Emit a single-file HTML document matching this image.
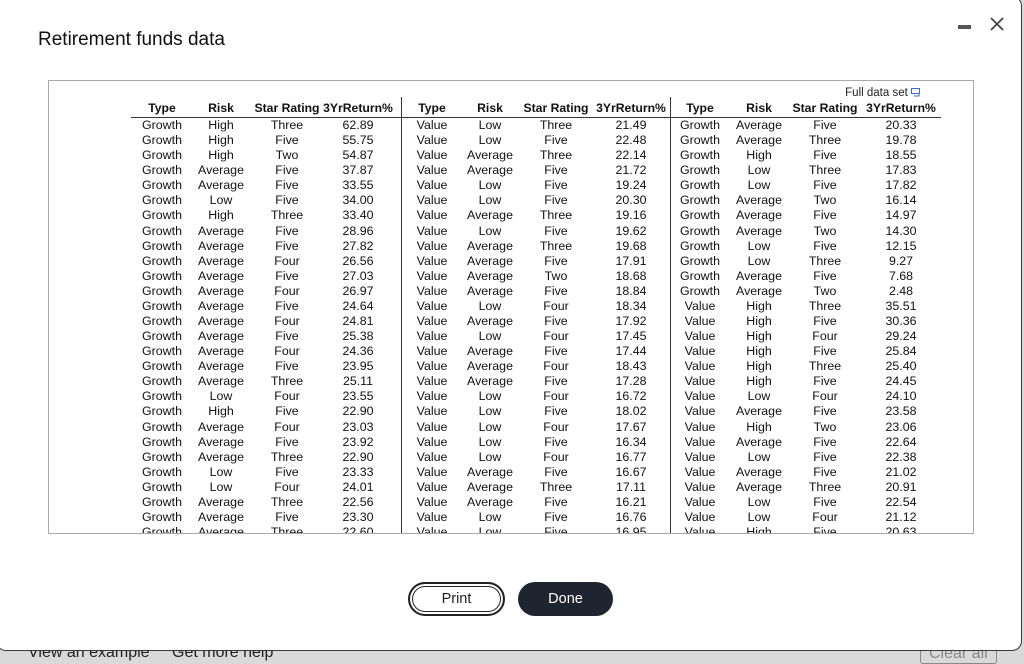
<!DOCTYPE html>
<html><head><meta charset="utf-8"><style>
*{margin:0;padding:0;box-sizing:border-box}
body{width:1024px;height:657px;overflow:hidden;background:#d9d9d9;font-family:"Liberation Sans",Arial,sans-serif;position:relative}
.modal{position:absolute;left:-4px;top:-4px;width:1026px;height:655px;background:#fff;border:1.5px solid #3a3a3a;border-radius:0 10px 10px 10px;z-index:1}
.z{z-index:2}
.title{position:absolute;left:38px;top:29px;font-size:19px;color:#111;z-index:2}
.box{position:absolute;left:48px;top:80px;width:926px;height:454px;border:1px solid #aaa;overflow:hidden;background:#fff;z-index:2}
.col{position:absolute;width:90px;text-align:center;font-size:12.4px;line-height:15.08px;color:#111;white-space:nowrap}
.hd{position:absolute;width:100px;text-align:center;font-size:12.2px;font-weight:bold;color:#111;top:20px;white-space:nowrap}
.hline{position:absolute;left:82px;top:36px;width:810px;height:1px;background:#333}
.vline{position:absolute;width:1px;background:#333;top:16px;height:440px}
.fds{position:absolute;right:52px;top:6px;font-size:11.5px;color:#222}
.btn{position:absolute;top:582px;height:34px;border-radius:17px;font-size:14.5px;text-align:center;line-height:30px;z-index:2}
.bot{position:absolute;top:644px;font-size:16px;color:#222}
</style></head><body>
<div class="bot" style="left:28px">View an example</div>
<div class="bot" style="left:172px">Get more help</div>
<div class="bot" style="left:920px;color:#888;border:1px solid #888;padding:0 8px;border-radius:3px">Clear all</div>
<div class="modal"></div>
<div class="title">Retirement funds data</div>
<div class="z" style="position:absolute;left:958px;top:25px;width:13px;height:4px;background:#555"></div>
<svg class="z" style="position:absolute;left:989px;top:16px" width="16" height="16"><path d="M2 2L14 14M14 2L2 14" stroke="#444" stroke-width="1.8"/></svg>
<div class="box">
<div class="fds">Full data set <svg width="10" height="9" style="vertical-align:-1px"><rect x="0.5" y="0.5" width="8" height="5" fill="none" stroke="#3a6bd4"/><path d="M3 8h5v-2" fill="none" stroke="#3a6bd4"/></svg></div>
<div class="hd" style="left:63px">Type</div><div class="hd" style="left:122px">Risk</div><div class="hd" style="left:188px">Star Rating</div><div class="hd" style="left:259px">3YrReturn%</div>
<div class="hd" style="left:333px">Type</div><div class="hd" style="left:391px">Risk</div><div class="hd" style="left:457px">Star Rating</div><div class="hd" style="left:532px">3YrReturn%</div>
<div class="hd" style="left:601px">Type</div><div class="hd" style="left:660px">Risk</div><div class="hd" style="left:726px">Star Rating</div><div class="hd" style="left:802px">3YrReturn%</div>
<div class="hline"></div>
<div class="vline" style="left:352px"></div><div class="vline" style="left:621px"></div>
<div class="col" style="left:68px;top:37px">Growth<br>Growth<br>Growth<br>Growth<br>Growth<br>Growth<br>Growth<br>Growth<br>Growth<br>Growth<br>Growth<br>Growth<br>Growth<br>Growth<br>Growth<br>Growth<br>Growth<br>Growth<br>Growth<br>Growth<br>Growth<br>Growth<br>Growth<br>Growth<br>Growth<br>Growth<br>Growth<br>Growth</div>
<div class="col" style="left:127px;top:37px">High<br>High<br>High<br>Average<br>Average<br>Low<br>High<br>Average<br>Average<br>Average<br>Average<br>Average<br>Average<br>Average<br>Average<br>Average<br>Average<br>Average<br>Low<br>High<br>Average<br>Average<br>Average<br>Low<br>Low<br>Average<br>Average<br>Average</div>
<div class="col" style="left:193px;top:37px">Three<br>Five<br>Two<br>Five<br>Five<br>Five<br>Three<br>Five<br>Five<br>Four<br>Five<br>Four<br>Five<br>Four<br>Five<br>Four<br>Five<br>Three<br>Four<br>Five<br>Four<br>Five<br>Three<br>Five<br>Four<br>Three<br>Five<br>Three</div>
<div class="col" style="left:264px;top:37px">62.89<br>55.75<br>54.87<br>37.87<br>33.55<br>34.00<br>33.40<br>28.96<br>27.82<br>26.56<br>27.03<br>26.97<br>24.64<br>24.81<br>25.38<br>24.36<br>23.95<br>25.11<br>23.55<br>22.90<br>23.03<br>23.92<br>22.90<br>23.33<br>24.01<br>22.56<br>23.30<br>22.60</div>
<div class="col" style="left:338px;top:37px">Value<br>Value<br>Value<br>Value<br>Value<br>Value<br>Value<br>Value<br>Value<br>Value<br>Value<br>Value<br>Value<br>Value<br>Value<br>Value<br>Value<br>Value<br>Value<br>Value<br>Value<br>Value<br>Value<br>Value<br>Value<br>Value<br>Value<br>Value</div>
<div class="col" style="left:396px;top:37px">Low<br>Low<br>Average<br>Average<br>Low<br>Low<br>Average<br>Low<br>Average<br>Average<br>Average<br>Average<br>Low<br>Average<br>Low<br>Average<br>Average<br>Average<br>Low<br>Low<br>Low<br>Low<br>Low<br>Average<br>Average<br>Average<br>Low<br>Low</div>
<div class="col" style="left:462px;top:37px">Three<br>Five<br>Three<br>Five<br>Five<br>Five<br>Three<br>Five<br>Three<br>Five<br>Two<br>Five<br>Four<br>Five<br>Four<br>Five<br>Four<br>Five<br>Four<br>Five<br>Four<br>Five<br>Four<br>Five<br>Three<br>Five<br>Five<br>Five</div>
<div class="col" style="left:537px;top:37px">21.49<br>22.48<br>22.14<br>21.72<br>19.24<br>20.30<br>19.16<br>19.62<br>19.68<br>17.91<br>18.68<br>18.84<br>18.34<br>17.92<br>17.45<br>17.44<br>18.43<br>17.28<br>16.72<br>18.02<br>17.67<br>16.34<br>16.77<br>16.67<br>17.11<br>16.21<br>16.76<br>16.95</div>
<div class="col" style="left:606px;top:37px">Growth<br>Growth<br>Growth<br>Growth<br>Growth<br>Growth<br>Growth<br>Growth<br>Growth<br>Growth<br>Growth<br>Growth<br>Value<br>Value<br>Value<br>Value<br>Value<br>Value<br>Value<br>Value<br>Value<br>Value<br>Value<br>Value<br>Value<br>Value<br>Value<br>Value</div>
<div class="col" style="left:665px;top:37px">Average<br>Average<br>High<br>Low<br>Low<br>Average<br>Average<br>Average<br>Low<br>Low<br>Average<br>Average<br>High<br>High<br>High<br>High<br>High<br>High<br>Low<br>Average<br>High<br>Average<br>Low<br>Average<br>Average<br>Low<br>Low<br>High</div>
<div class="col" style="left:731px;top:37px">Five<br>Three<br>Five<br>Three<br>Five<br>Two<br>Five<br>Two<br>Five<br>Three<br>Five<br>Two<br>Three<br>Five<br>Four<br>Five<br>Three<br>Five<br>Four<br>Five<br>Two<br>Five<br>Five<br>Five<br>Three<br>Five<br>Four<br>Five</div>
<div class="col" style="left:807px;top:37px">20.33<br>19.78<br>18.55<br>17.83<br>17.82<br>16.14<br>14.97<br>14.30<br>12.15<br>9.27<br>7.68<br>2.48<br>35.51<br>30.36<br>29.24<br>25.84<br>25.40<br>24.45<br>24.10<br>23.58<br>23.06<br>22.64<br>22.38<br>21.02<br>20.91<br>22.54<br>21.12<br>20.63</div>
</div>
<div class="btn" style="left:408px;width:97px;border:2px solid #222;box-shadow:inset 0 0 0 2px #fff,inset 0 0 0 3px #222;color:#222">Print</div>
<div class="btn" style="left:518px;width:95px;background:#1f2530;color:#fff;line-height:34px">Done</div>
</body></html>
